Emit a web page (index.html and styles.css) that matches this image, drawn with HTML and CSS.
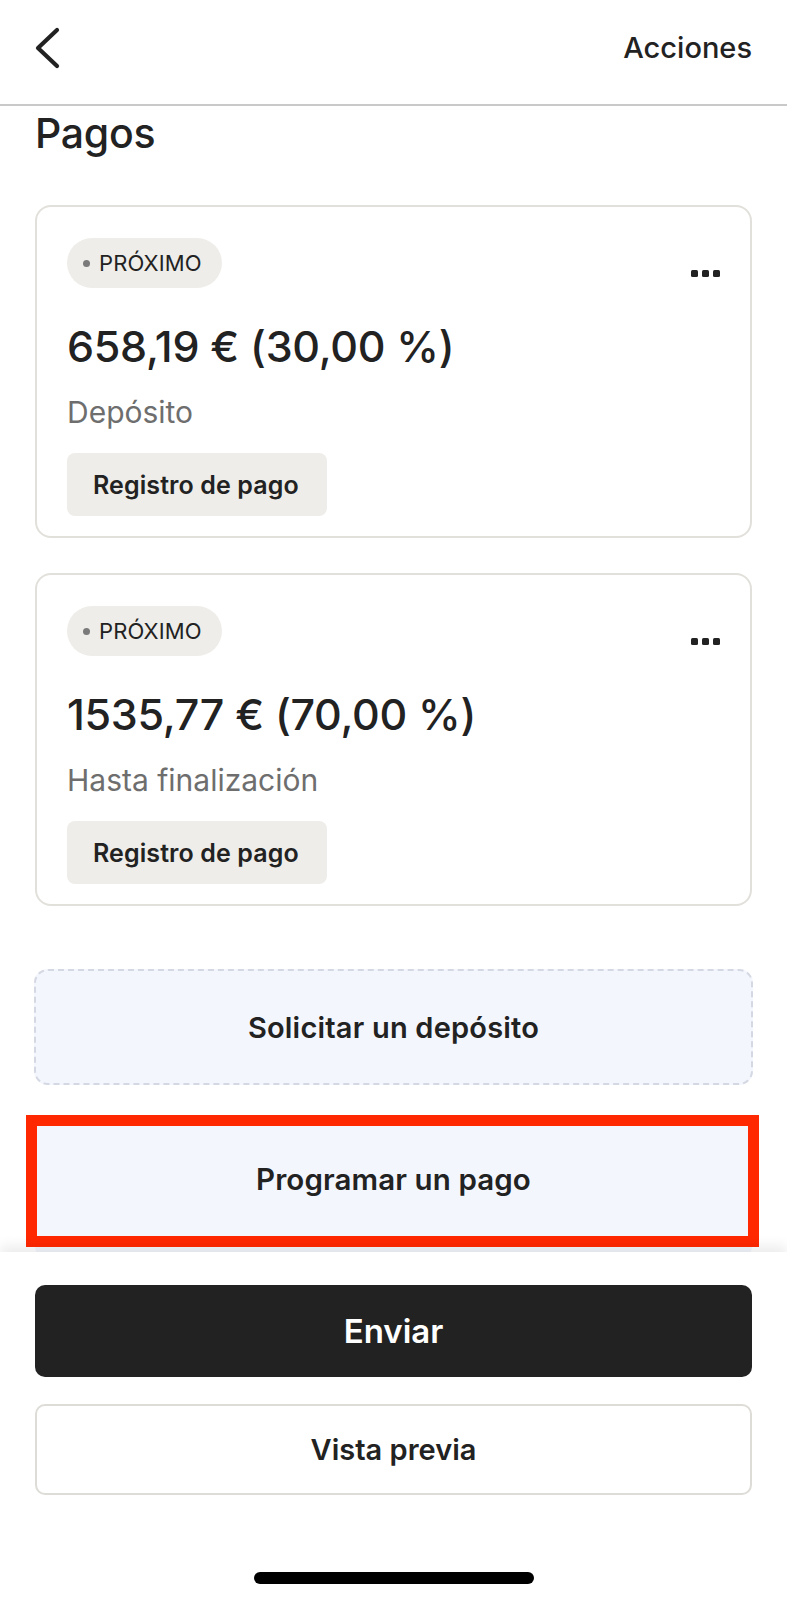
FILE: index.html
```html
<!DOCTYPE html>
<html lang="es">
<head>
<meta charset="utf-8">
<title>Pagos</title>
<link rel="stylesheet" href="styles.css">
</head>
<body>
<div class="screen">
  <div class="main">
    <header class="topbar">
      <svg class="back" width="28" height="42" viewBox="0 0 28 42"><path d="M24 3 L5 21 L24 39" fill="none" stroke="#222" stroke-width="4.2" stroke-linecap="round" stroke-linejoin="round"/></svg>
      <span class="actions">Acciones</span>
    </header>
    <div class="content">
      <h1 class="title">Pagos</h1>
      <div class="card">
        <div class="card-head">
          <span class="badge"><span class="dot"></span>PRÓXIMO</span>
          <span class="more"><i></i><i></i><i></i></span>
        </div>
        <div class="amount">658,19 € (30,00 %)</div>
        <div class="label">Depósito</div>
        <button class="chip">Registro de pago</button>
      </div>
      <div class="card">
        <div class="card-head">
          <span class="badge"><span class="dot"></span>PRÓXIMO</span>
          <span class="more"><i></i><i></i><i></i></span>
        </div>
        <div class="amount">1535,77 € (70,00 %)</div>
        <div class="label">Hasta finalización</div>
        <button class="chip">Registro de pago</button>
      </div>
      <div class="dashed">Solicitar un depósito</div>
      <div class="plain">Programar un pago</div>
    </div>
    <div class="highlight"></div>
  </div>
  <footer class="footer">
    <button class="primary">Enviar</button>
    <button class="secondary">Vista previa</button>
    <div class="home"></div>
  </footer>
</div>
</body>
</html>
```

FILE: styles.css
```css
* { box-sizing: border-box; }
html, body { margin: 0; padding: 0; background: #fff; }
body { font-family: "Inter", "Noto Sans", sans-serif; color: #222; width: 787px; }
.screen { width: 787px; height: 1600px; display: flex; flex-direction: column; overflow: hidden; }
.main { position: relative; height: 1252px; overflow: hidden; flex: none; }
.topbar { height: 106px; border-bottom: 2px solid #c9c9c9; display: flex; align-items: center; justify-content: space-between; padding: 0 35px 10px 33px; }
.back { display: block; margin-top: 2px; }
.actions { font-size: 29px; font-weight: 500; color: #222; }
.content { padding: 0 35px 0 35px; display: flex; flex-direction: column; }
.title { margin: 2px 0 0 0; font-size: 41px; line-height: 50px; font-weight: 500; letter-spacing: -0.3px; }
.card { margin-top: 47px; border: 2px solid #e2e0db; border-radius: 16px; padding: 31px 30px 20px 30px; display: flex; flex-direction: column; align-items: flex-start; }
.card + .card { margin-top: 35px; }
.card-head { width: 100%; display: flex; justify-content: space-between; align-items: center; }
.badge { height: 50px; padding: 0 20px 0 16px; border-radius: 25px; background: #efede9; display: inline-flex; align-items: center; font-size: 22px; color: #222; letter-spacing: 0.1px; }
.dot { width: 7px; height: 7px; border-radius: 50%; background: #7a7a7a; margin-right: 9px; }
.more { display: flex; gap: 4px; margin-top: 20px; }
.more i { width: 7px; height: 7px; border-radius: 1.5px; background: #222; display: block; }
.amount { margin-top: 32px; font-size: 43px; line-height: 52px; font-weight: 500; letter-spacing: -0.3px; color: #222; }
.label { margin-top: 21px; font-size: 30px; line-height: 38px; color: #6e6e6e; }
.chip { margin-top: 22px; height: 63px; padding: 0 28px 0 26px; border: none; border-radius: 8px; background: #efede9; font-family: inherit; font-size: 25px; font-weight: 600; color: #222; letter-spacing: 0.1px; }
.dashed { margin-top: 63px; height: 116px; border: 2px dashed #d4d8e3; border-radius: 14px; background: #f4f6fd; display: flex; align-items: center; justify-content: center; font-size: 29px; font-weight: 600; color: #222; margin-left: -1px; margin-right: -1px; letter-spacing: 0.2px; }
.plain { margin-top: 35px; height: 140px; background: #f4f6fd; border-radius: 14px; display: flex; align-items: center; justify-content: center; font-size: 29.5px; font-weight: 600; color: #222; padding-bottom: 22px; letter-spacing: 0.1px; }
.highlight { position: absolute; left: 26px; top: 1115px; width: 733px; height: 132px; border: 11px solid #ff2800; }
.footer { flex: 1; background: #fff; box-shadow: 0 -6px 12px rgba(0,0,0,0.08); position: relative; padding: 33px 35px 0 35px; display: flex; flex-direction: column; align-items: stretch; }
.primary { height: 92px; border: none; border-radius: 10px; background: #222; color: #fff; font-family: inherit; font-size: 33px; font-weight: 600; }
.secondary { margin-top: 27px; height: 91px; border: 2px solid #dedcd7; border-radius: 10px; background: #fff; color: #222; font-family: inherit; font-size: 29px; font-weight: 600; }
.home { width: 280px; height: 12px; border-radius: 6px; background: #000; margin: 77px auto 0 auto; }
```
